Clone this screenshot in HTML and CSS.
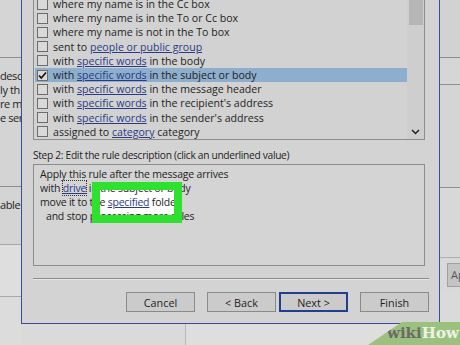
FILE: index.html
```html
<!DOCTYPE html>
<html lang="en">
<head>
  <meta charset="UTF-8" />
  <title>Rules Wizard</title>
  <link rel="stylesheet" href="styles.css">
</head>
<body>
  <div class="screen">

    <!-- window behind, left side -->
    <div class="bg-left">
      <div class="bg-pane pane-top"></div>
      <div class="bg-pane pane-text">
        <div class="bg-line">descr</div>
        <div class="bg-line">ly th</div>
        <div class="bg-line">re m</div>
        <div class="bg-line">e sen</div>
      </div>
      <div class="bg-pane pane-able">
        <div class="bg-line">able</div>
      </div>
      <div class="bg-pane pane-light"></div>
      <div class="bg-pane pane-rest"></div>
    </div>

    <!-- the rules wizard dialog -->
    <div class="dialog-col">
      <div class="dialog">
        <div class="listbox">
          <div class="rows">
            <div class="row"><span class="chk"></span>where my name is in the Cc box</div>
            <div class="row"><span class="chk"></span>where my name is in the To or Cc box</div>
            <div class="row"><span class="chk"></span>where my name is not in the To box</div>
            <div class="row"><span class="chk"></span>sent to&nbsp;<a>people or public group</a></div>
            <div class="row"><span class="chk"></span>with&nbsp;<a>specific words</a>&nbsp;in the body</div>
            <div class="row selected"><span class="chk checked">
              <svg width="11" height="11" viewBox="0 0 11 11"><polyline points="2,5.5 4.3,8 9,2.5" fill="none" stroke="#111" stroke-width="1.7"/></svg>
            </span>with&nbsp;<a>specific words</a>&nbsp;in the subject or body</div>
            <div class="row"><span class="chk"></span>with&nbsp;<a>specific words</a>&nbsp;in the message header</div>
            <div class="row"><span class="chk"></span>with&nbsp;<a>specific words</a>&nbsp;in the recipient's address</div>
            <div class="row"><span class="chk"></span>with&nbsp;<a>specific words</a>&nbsp;in the sender's address</div>
            <div class="row"><span class="chk"></span>assigned to&nbsp;<a>category</a>&nbsp;category</div>
          </div>
          <div class="scrollbar">
            <div class="thumb"></div>
            <svg class="chevron" width="9" height="6" viewBox="0 0 9 6"><polyline points="1,1 4.5,4.5 8,1" fill="none" stroke="#222" stroke-width="1.5"/></svg>
          </div>
        </div>

        <div class="step-label">Step 2: Edit the rule description (click an underlined value)</div>

        <div class="desc">
          <div class="mark-fill"></div>
          <div class="desc-text">
            <div class="desc-line">Apply this rule after the message arrives</div>
            <div class="desc-line">with <a class="focused">drive</a> in the subject or body</div>
            <div class="desc-line">move it to the <a>specified</a> folder</div>
            <div class="desc-line indent">and stop processing more rules</div>
          </div>
          <div class="mark-frame"></div>
        </div>

        <div class="separator"></div>

        <div class="buttons">
          <div class="btn">Cancel</div>
          <div class="btn-pair">
            <div class="btn">&lt; Back</div>
            <div class="btn default">Next &gt;</div>
          </div>
          <div class="btn">Finish</div>
        </div>
      </div>
      <div class="below">
        <div class="below-left"></div>
        <div class="below-right"></div>
      </div>
    </div>

    <!-- window behind, right side -->
    <div class="bg-right">
      <div class="rp rp-1"></div>
      <div class="rp rp-2"></div>
      <div class="rp rp-3"></div>
      <div class="rp rp-4"></div>
      <div class="rp rp-5"><div class="apply">Ap</div></div>
      <div class="rp rp-6"></div>
    </div>

    <div class="watermark"><span class="wiki">wiki</span><span class="how">How</span></div>
  </div>
</body>
</html>
```

FILE: styles.css
```css
/* BASE */
* { margin: 0; padding: 0; box-sizing: border-box; }
body {
  background: #d6d6d6;
  font-family: 'Open Sans', 'Liberation Sans', sans-serif;
  color: #1e1e1e;
}
a { color: #2b3a86; text-decoration: underline; text-underline-offset: 1px; }

.screen {
  position: relative;
  width: 460px; height: 345px;
  overflow: hidden;
  display: flex;
  background: #d6d6d6;
}

/* BACKGROUND WINDOW, LEFT */
.bg-left {
  width: 21px; flex: none;
  display: flex; flex-direction: column;
  overflow: hidden;
  font-size: 11px;
  letter-spacing: -0.4px;
}
.bg-pane { border-bottom: 1px solid #8e8e8e; }
.pane-top { height: 58px; background: #d5d5d5; }
.pane-text { height: 129px; padding-top: 11px; background: #d4d4d4; }
.pane-able { height: 58px; padding-top: 11px; background: #d4d4d4; border-bottom-color: #a8a8a8; }
.pane-light { height: 52px; background: #dedede; border-bottom-color: #a8a8a8; }
.pane-rest { flex: 1; background: #dcdcdc; border: none; }
.bg-line { height: 14px; line-height: 14px; white-space: nowrap; overflow: hidden; }

/* DIALOG */
.dialog-col {
  width: 419px; flex: none;
  display: flex; flex-direction: column;
}
.dialog {
  background: #d3d3d3;
  border: 1px solid #3c4d92; border-top: none;
  padding: 0 10px 11px 11px;
  display: flex; flex-direction: column;
}

.listbox {
  margin-top: -3px; margin-right: 4px;
  height: 143px;
  border: 1px solid #8c8c8c; border-top: none;
  background: #d2d2d2;
  display: flex;
}
.rows { flex: 1; padding-left: 1px; font-size: 10.6px; }
.row {
  height: 14.2px; line-height: 14px;
  display: flex; align-items: center;
  white-space: nowrap;
}
.row.selected { background: #8eaecd; }
.chk {
  width: 11px; height: 11px; flex: none;
  border: 1px solid #6c6c6c;
  background: #d9d9d9;
  margin: 0 5px 0 2px;
  display: flex;
}
.chk svg { margin: -1px; }

.scrollbar {
  width: 17px; flex: none;
  background: #cecece;
  display: flex; flex-direction: column; align-items: center;
  justify-content: space-between;
  padding: 0 1px 4px;
}
.thumb { width: 14px; height: 28px; background: #b6b6b6; }

.step-label {
  margin-top: 7px;
  height: 16px; line-height: 16px;
  font-size: 10.2px;
  letter-spacing: -0.3px;
  white-space: nowrap;
}

.desc {
  position: relative;
  margin-top: 1px; margin-right: 4px;
  height: 102px;
  border: 1px solid #8c8c8c;
  background: #d4d4d4;
  padding: 2px 0 0 6px;
  font-size: 10.5px;
  letter-spacing: -0.2px;
}
.desc-text { position: relative; z-index: 1; }
.desc-line { height: 14px; line-height: 14px; white-space: nowrap; }
.desc-line.indent { padding-left: 6px; }
.focused { outline: 1px dotted #333; outline-offset: 0; }

/* annotation box drawn over the text */
.mark-fill, .mark-frame {
  position: absolute;
  left: 58px; top: 17px;
  width: 90px; height: 41px;
}
.mark-fill { background: #fff; }
.mark-frame { border: 8px solid #2fe12f; z-index: 2; }

.separator {
  margin-top: 12px;
  height: 2px;
  border-top: 1px solid #8c8c8c;
  border-bottom: 1px solid #e6e6e6;
}

.buttons {
  margin-top: 12px;
  display: flex; justify-content: flex-end;
  gap: 12px;
}
.btn-pair { display: flex; gap: 3px; }
.btn {
  width: 69px; height: 20px;
  border: 1px solid #8a8a8a;
  background: #cbcbcb;
  font-size: 10.8px;
  display: flex; align-items: center; justify-content: center;
}
.btn.default { border: 2px solid #213f8c; }

.below { flex: 1; display: flex; }
.below-left { width: 165px; border-right: 1px solid #b8b8b8; background: #dadada; }
.below-right { flex: 1; background: #dedede; }

/* BACKGROUND WINDOW, RIGHT */
.bg-right {
  flex: 1;
  display: flex; flex-direction: column;
  font-size: 11px;
}
.rp { border-bottom: 1px solid #8e8e8e; background: #d2d2d2; }
.rp-1 { height: 58px; }
.rp-2 { height: 27px; background: #d6d6d6; }
.rp-3 { height: 103px; background: #d5d5d5; }
.rp-4 { height: 70px; background: #d8d8d8; border-bottom-color: #b0b0b0; }
.rp-5 { height: 35px; padding: 5px 0 0 7px; background: #d9d9d9; border: none; }
.rp-6 { flex: 1; background: #dadada; border: none; }
.apply {
  height: 24px; padding-left: 3px;
  line-height: 22px;
  background: #c4c4c4;
  border: 1px solid #a0a0a0; border-right: none;
  color: #555;
}

/* WATERMARK */
.watermark {
  position: absolute; right: 0; bottom: 0;
  width: 92px; height: 23px;
  padding-left: 19px;
  background: #9cc17e;
  clip-path: polygon(34px 0, 100% 0, 100% 100%, 0 100%);
  font-family: 'DejaVu Serif', serif;
  font-weight: bold; font-size: 15px;
  line-height: 23px;
  white-space: nowrap;
}
.wiki { color: #6a6a6a; }
.how { color: #eef3e8; }
```
